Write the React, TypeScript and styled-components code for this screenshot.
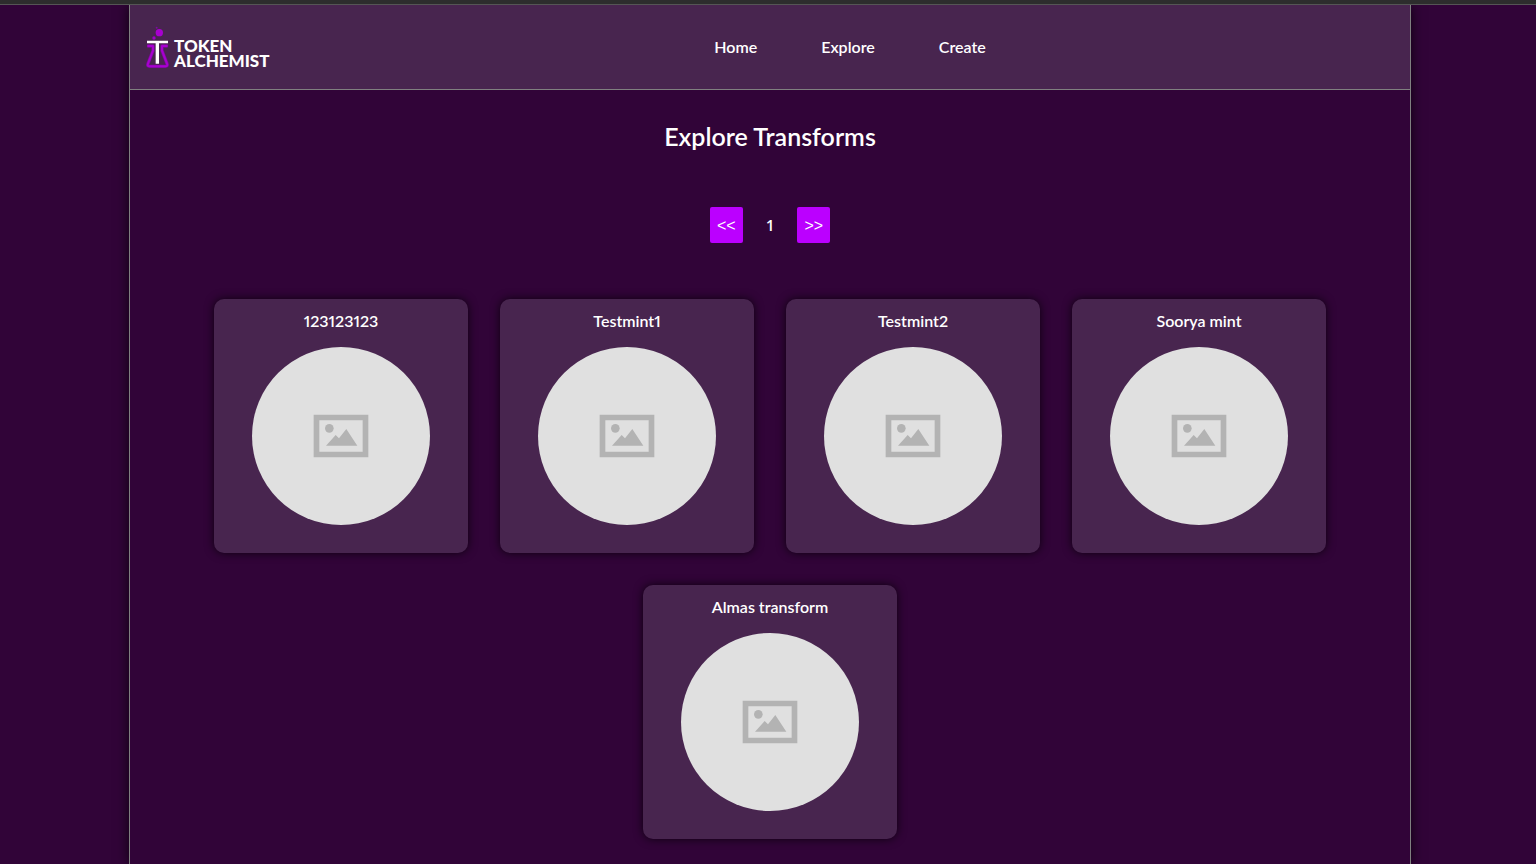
import React from "react";
import styled, { createGlobalStyle } from "styled-components";

const GlobalStyle = createGlobalStyle`
  *, *::before, *::after { box-sizing: border-box; }
  body {
    margin: 0;
    background: #310438;
    color: #fff;
    font-family: Lato, "Liberation Sans", sans-serif;
    font-size: 16px;
    font-weight: 600;
    font-variant-numeric: proportional-nums;
    line-height: 24px;
  }
  #root { min-height: 100vh; display: flex; flex-direction: column; }
`;

const TopStrip = styled.div`
  height: 5px;
  background: #2d2d2d;
  border-bottom: 1px solid #555;
`;

const Page = styled.div`
  flex: 1;
  display: flex;
  justify-content: center;
  padding-left: 4px;
  overflow: hidden;
`;

const Column = styled.div`
  width: 100%;
  max-width: 1282px;
  border: solid #808080;
  border-width: 0 1px;
  box-shadow: 0 0 12px rgba(0, 0, 0, 0.75);
`;

const Header = styled.header`
  display: flex;
  align-items: center;
  height: 85px;
  padding: 0 16px;
  background: #48254f;
  border-bottom: 1px solid #808080;
`;

const Logo = styled.a`
  display: flex;
  align-items: flex-end;
  gap: 4px;
  width: 160px;
  color: #fff;
  text-decoration: none;
`;

const LogoText = styled.span`
  display: flex;
  flex-direction: column;
  font-size: 17px;
  font-weight: 900;
  line-height: 15px;
`;

const Nav = styled.nav`
  flex: 1;
  display: flex;
  justify-content: center;
  gap: 64px;
`;

const NavLink = styled.a`
  color: #fff;
  text-decoration: none;
`;

const Main = styled.main`
  display: flex;
  flex-direction: column;
  align-items: center;
  padding: 32px 16px 24px;
`;

const Title = styled.h1`
  margin: 0;
  font-size: 25px;
  font-weight: 600;
  line-height: 28px;
`;

const Pager = styled.div`
  display: flex;
  align-items: center;
  gap: 24px;
  padding: 57px 0 56px;
`;

const PageButton = styled.button`
  width: 33px;
  height: 36px;
  padding: 2px 0 0;
  border: 0;
  border-radius: 2px;
  background: #bb00ff;
  color: #fff;
  font-family: "Liberation Sans", sans-serif;
  font-size: 16px;
`;

const Cards = styled.div`
  display: flex;
  flex-wrap: wrap;
  justify-content: center;
  gap: 32px;
  max-width: 1120px;
`;

const Card = styled.article`
  display: flex;
  flex-direction: column;
  align-items: center;
  gap: 14px;
  width: 254px;
  height: 254px;
  padding-top: 10px;
  border-radius: 10px;
  background: #48254f;
  box-shadow: 0 0 10px rgba(0, 0, 0, 0.75);
`;

const CardTitle = styled.h2`
  margin: 0;
  font-size: 16px;
  font-weight: 600;
  line-height: 24px;
`;

const Placeholder = styled.div`
  display: flex;
  align-items: center;
  justify-content: center;
  width: 178px;
  height: 178px;
  border-radius: 50%;
  background: #e0e0e0;
`;

const FlaskIcon = () => (
  <svg width="24" height="42" viewBox="108 76 72 126" aria-hidden="true">
    <g fill="none" strokeLinejoin="round">
      <path stroke="#7c0a9c" strokeWidth="10" d="M112 136H129V150L114 189Q111 197 119 197H166Q174 197 171 189L156 150V136H173" />
      <path stroke="#a800d0" strokeWidth="6" d="M112 136H129V150L114 189Q111 197 119 197H166Q174 197 171 189L156 150V136H173" />
    </g>
    <circle cx="148" cy="96" r="11" fill="#a800d0" />
    <circle cx="132" cy="112" r="5" fill="#a000c8" />
    <circle cx="140" cy="81" r="3" fill="#7c0a9c" />
    <path d="M111 120H174V128H147V189H137V128H111Z" fill="#fff" />
  </svg>
);

const ImageIcon = () => (
  <svg width="56" height="44" viewBox="41 42 168 132" aria-hidden="true">
    <path fill="#b3b3b3" fillRule="evenodd" d="M43 44H207V172H43ZM60 61V155H190V61Z" />
    <circle cx="90" cy="85" r="13" fill="#b3b3b3" />
    <path fill="#b3b3b3" d="M80 137L109 105L119 115L141 87L174 137Z" />
  </svg>
);

const transforms = ["123123123", "Testmint1", "Testmint2", "Soorya mint", "Almas transform"];

export default function App() {
  return (
    <>
      <GlobalStyle />
      <TopStrip />
      <Page>
        <Column>
          <Header>
            <Logo href="#">
              <FlaskIcon />
              <LogoText>
                <span>TOKEN</span>
                <span>ALCHEMIST</span>
              </LogoText>
            </Logo>
            <Nav>
              <NavLink href="#home">Home</NavLink>
              <NavLink href="#explore">Explore</NavLink>
              <NavLink href="#create">Create</NavLink>
            </Nav>
          </Header>
          <Main>
            <Title>Explore Transforms</Title>
            <Pager>
              <PageButton type="button">&lt;&lt;</PageButton>
              <span>1</span>
              <PageButton type="button">&gt;&gt;</PageButton>
            </Pager>
            <Cards>
              {transforms.map((name) => (
                <Card key={name}>
                  <CardTitle>{name}</CardTitle>
                  <Placeholder>
                    <ImageIcon />
                  </Placeholder>
                </Card>
              ))}
            </Cards>
          </Main>
        </Column>
      </Page>
    </>
  );
}
